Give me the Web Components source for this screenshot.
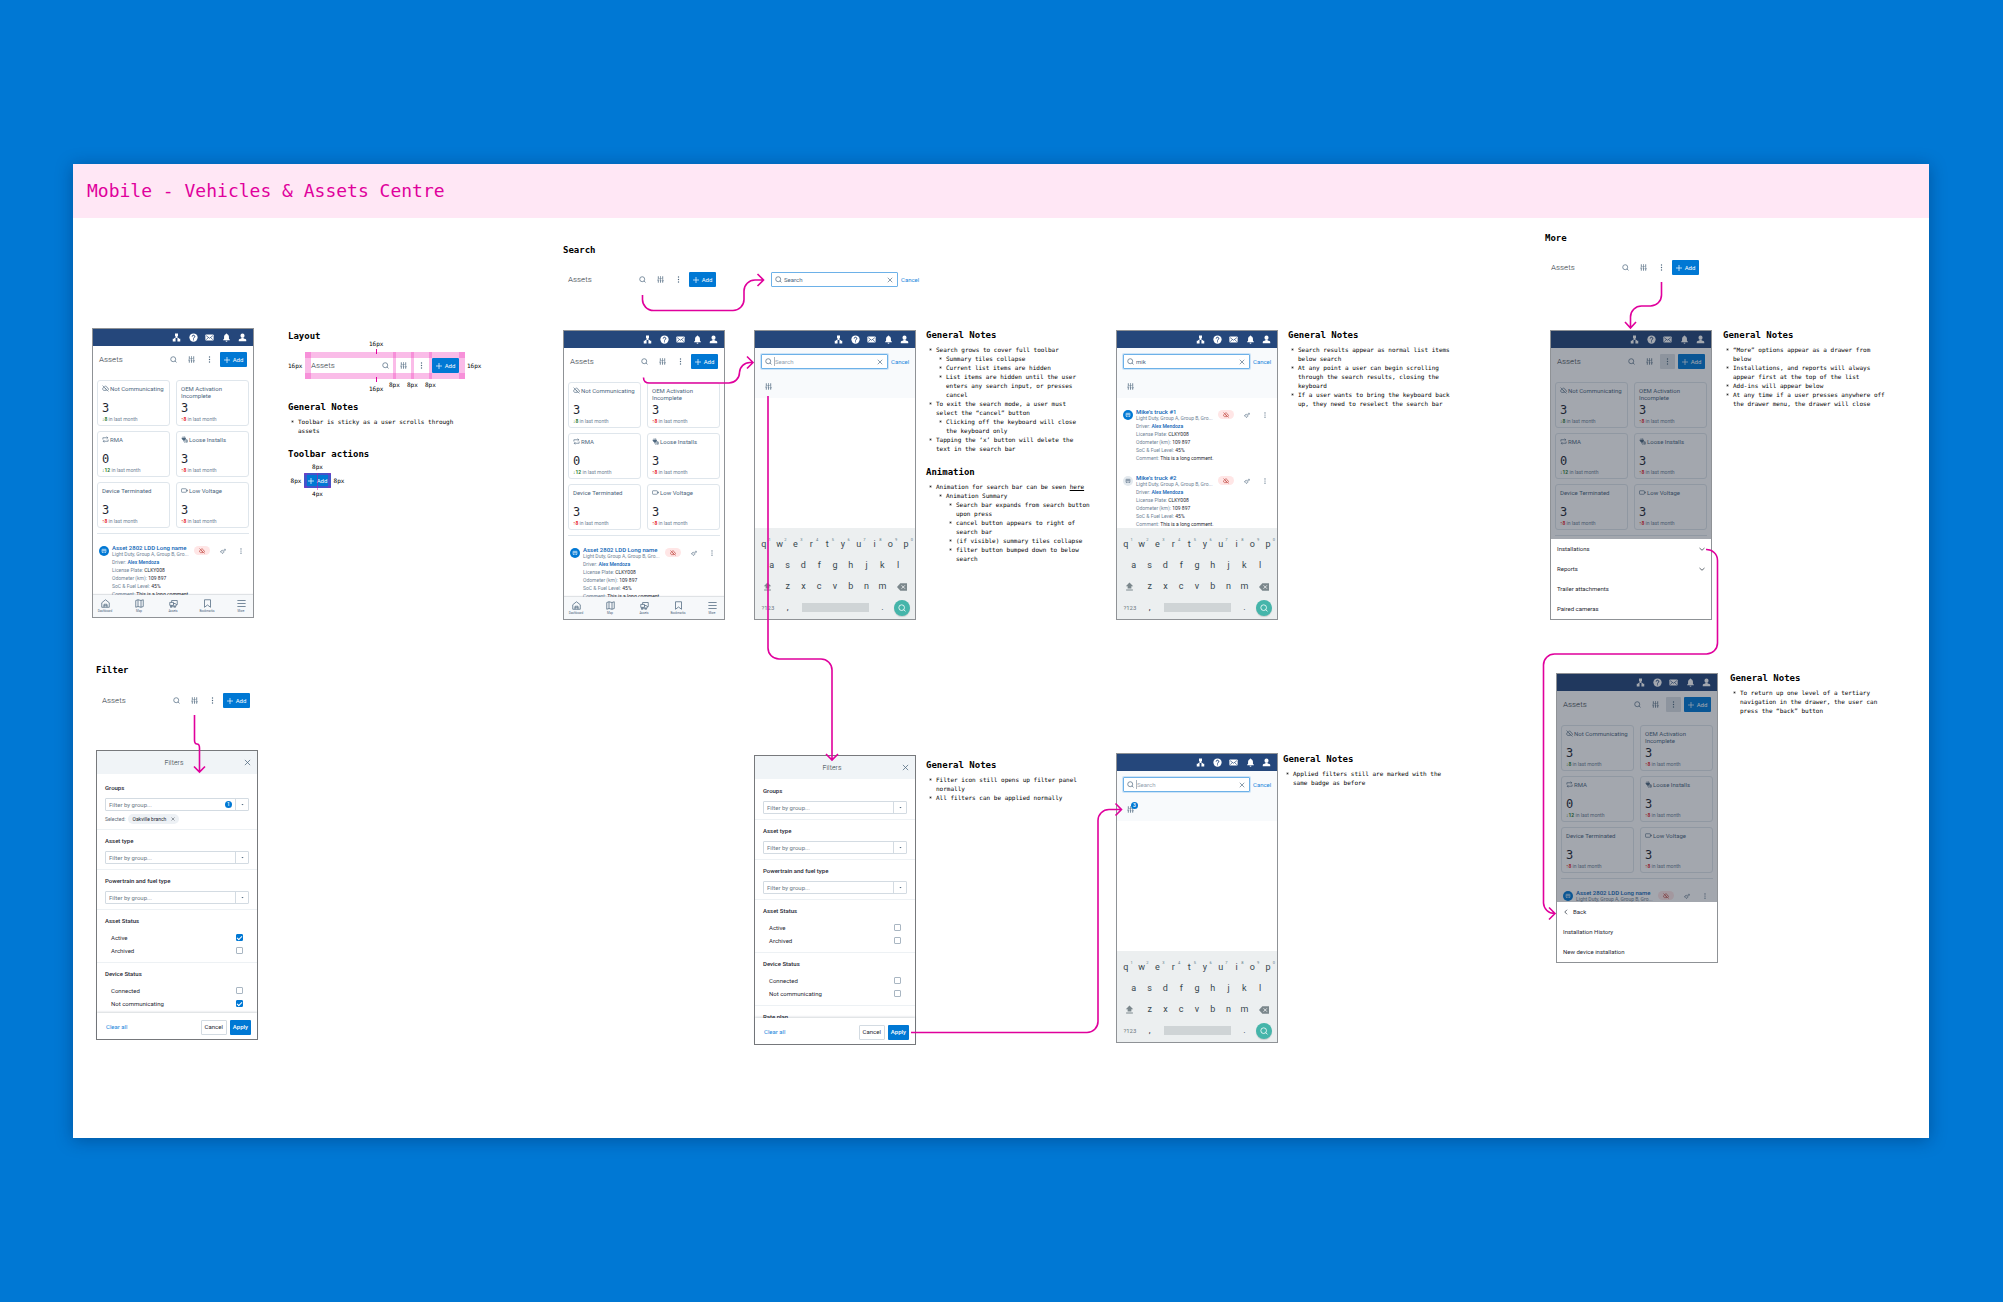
<!DOCTYPE html>
<html lang="en">
<head>
<meta charset="utf-8">
<title>Mobile - Vehicles &amp; Assets Centre</title>
<style>
  html { background: #0078d4; }
  body {
    margin: 0;
    padding: 164px 74px 164px 73px;
    font-family: Roboto, "Liberation Sans", sans-serif;
    --mono: "DejaVu Sans Mono", "Liberation Mono", monospace;
    --magenta: #e0009c;
    --blue: #0078d4;
    --navy: #25477b;
    --slate: #4e677e;
    --ink: #1f2833;
    --line: #dfe6ec;
  }
</style>
</head>
<body>
<spec-board heading="Mobile - Vehicles &amp; Assets Centre">

  <!-- Base layout -->
  <phone-frame style="left:19px;top:110px"><top-nav></top-nav><asset-toolbar></asset-toolbar><summary-grid></summary-grid><asset-row name="Asset 2802 LDD Long name"></asset-row><tab-bar slot="bottom"></tab-bar></phone-frame>
  <spec-heading style="left:215px;top:112px">Layout</spec-heading>
  <toolbar-diagram style="left:215px;top:121px"></toolbar-diagram>
  <note-stack style="left:215px;top:183px">
    <note-block heading="General Notes"><note-item>Toolbar is sticky as a user scrolls through assets</note-item></note-block>
    <note-block heading="Toolbar actions"></note-block>
  </note-stack>
  <button-diagram style="left:217px;top:245px"></button-diagram>

  <!-- Search -->
  <spec-heading style="left:490px;top:26px">Search</spec-heading>
  <asset-toolbar class="loose" style="left:489px;top:48px"></asset-toolbar>
  <search-bar class="loose" style="left:692px;top:48px"></search-bar>
  <phone-frame style="left:490px;top:112px"><top-nav></top-nav><asset-toolbar></asset-toolbar><summary-grid></summary-grid><asset-row name="Asset 2802 LDD Long name"></asset-row><tab-bar slot="bottom"></tab-bar></phone-frame>
  <phone-frame style="left:681px;top:112px"><top-nav></top-nav><search-head caret></search-head><soft-keyboard slot="bottom"></soft-keyboard></phone-frame>
  <note-stack style="left:853px;top:111px">
    <note-block heading="General Notes" style="--chars:42ch">
      <note-item>Search grows to cover full toolbar
        <note-item slot="sub" level="2">Summary tiles collapse</note-item>
        <note-item slot="sub" level="2">Current list items are hidden</note-item>
        <note-item slot="sub" level="2">List items are hidden until the user enters any search input, or presses cancel</note-item>
      </note-item>
      <note-item>To exit the search mode, a user must select the “cancel” button
        <note-item slot="sub" level="2">Clicking off the keyboard will close the keyboard only</note-item>
      </note-item>
      <note-item>Tapping the ‘x’ button will delete the text in the search bar</note-item>
    </note-block>
    <note-block heading="Animation" style="--chars:42ch">
      <note-item>Animation for search bar can be seen <a href="#animation" style="color:inherit">here</a>
        <note-item slot="sub" level="2">Animation Summary
          <note-item slot="sub" level="3">Search bar expands from search button upon press</note-item>
          <note-item slot="sub" level="3">cancel button appears to right of search bar</note-item>
          <note-item slot="sub" level="3">(if visible) summary tiles collapse</note-item>
          <note-item slot="sub" level="3">filter button bumped down to below search</note-item>
        </note-item>
      </note-item>
    </note-block>
  </note-stack>
  <phone-frame style="left:1043px;top:112px"><top-nav></top-nav><search-head value="mik"></search-head><asset-row name="Mike’s truck #1"></asset-row><asset-row name="Mike’s truck #2" muted></asset-row><soft-keyboard slot="bottom"></soft-keyboard></phone-frame>
  <note-stack style="left:1215px;top:111px">
    <note-block heading="General Notes">
      <note-item>Search results appear as normal list items below search</note-item>
      <note-item>At any point a user can begin scrolling through the search results, closing the keyboard</note-item>
      <note-item>If a user wants to bring the keyboard back up, they need to reselect the search bar</note-item>
    </note-block>
  </note-stack>

  <!-- More -->
  <spec-heading style="left:1472px;top:14px">More</spec-heading>
  <asset-toolbar class="loose" style="left:1472px;top:36px"></asset-toolbar>
  <phone-frame style="left:1477px;top:112px"><top-nav></top-nav><asset-toolbar active></asset-toolbar><summary-grid></summary-grid>
    <action-drawer slot="drawer">
      <drawer-item expands>Installations</drawer-item><drawer-item expands>Reports</drawer-item><drawer-item>Trailer attachments</drawer-item><drawer-item>Paired cameras</drawer-item>
    </action-drawer>
  </phone-frame>
  <note-stack style="left:1650px;top:111px">
    <note-block heading="General Notes">
      <note-item>“More” options appear as a drawer from below</note-item>
      <note-item>Installations, and reports will always appear first at the top of the list</note-item>
      <note-item>Add-ins will appear below</note-item>
      <note-item>At any time if a user presses anywhere off the drawer menu, the drawer will close</note-item>
    </note-block>
  </note-stack>
  <phone-frame style="left:1483px;top:455px"><top-nav></top-nav><asset-toolbar active></asset-toolbar><summary-grid></summary-grid><asset-row name="Asset 2802 LDD Long name" compact></asset-row>
    <action-drawer slot="drawer">
      <drawer-item back>Back</drawer-item><drawer-item>Installation History</drawer-item><drawer-item>New device installation</drawer-item>
    </action-drawer>
  </phone-frame>
  <note-stack style="left:1657px;top:454px">
    <note-block heading="General Notes"><note-item>To return up one level of a tertiary navigation in the drawer, the user can press the “back” button</note-item></note-block>
  </note-stack>

  <!-- Filter -->
  <spec-heading style="left:23px;top:446px">Filter</spec-heading>
  <asset-toolbar class="loose" style="left:23px;top:469px"></asset-toolbar>
  <filter-panel style="left:23px;top:532px" selected="Oakville branch" checked="Active,Not communicating"></filter-panel>
  <filter-panel style="left:681px;top:537px"></filter-panel>
  <note-stack style="left:853px;top:541px">
    <note-block heading="General Notes">
      <note-item>Filter icon still opens up filter panel normally</note-item>
      <note-item>All filters can be applied normally</note-item>
    </note-block>
  </note-stack>
  <phone-frame style="left:1043px;top:535px"><top-nav></top-nav><search-head caret badge="3"></search-head><soft-keyboard slot="bottom"></soft-keyboard></phone-frame>
  <note-stack style="left:1210px;top:535px">
    <note-block heading="General Notes"><note-item>Applied filters still are marked with the same badge as before</note-item></note-block>
  </note-stack>

  <flow-arrows></flow-arrows>
</spec-board>

<script>
const ICONS = {
  sitemap: '<path fill="currentColor" d="M8 1.500h8V9h-2.500v2l5 3v1H22v7.500h-7.500V15H16l-4-2.300L8 15h1.500v7.500H2V15h3.500v-1l5-3V9H8z"/>',
  help: '<circle cx="12" cy="12" r="11" fill="currentColor"/><path fill="none" stroke="#25477b" stroke-width="2.600" d="M8.500 9.500a3.500 3.500 0 1 1 5.200 3c-1.200.7-1.700 1.200-1.700 2.500M12 17v2.500"/>',
  mail: '<rect x="1" y="4" width="22" height="16" rx="2" fill="currentColor"/><path fill="none" stroke="#25477b" stroke-width="1.800" d="M3 7l9 7 9-7M3 18l6-6M21 18l-6-6"/>',
  bell: '<path fill="currentColor" d="M12 1.500c1 0 1.800.8 1.800 1.800 3 .9 4.700 3.400 4.700 6.700v5l2.500 3v1.500H3V18l2.500-3v-5c0-3.300 1.700-5.800 4.700-6.700 0-1 .8-1.800 1.800-1.800zM9.500 20.500h5a2.500 2.500 0 0 1-5 0z"/>',
  user: '<circle cx="12" cy="7" r="5.500" fill="currentColor"/><path fill="currentColor" d="M9 12h6v2.500l5 1.500c1.500.5 2 1.500 2 3V22H2v-3c0-1.500.5-2.500 2-3l5-1.500z"/>',
  search: '<g fill="none" stroke="currentColor" stroke-width="2.400"><circle cx="11" cy="11" r="8.500"/><path d="M17 17l5.500 5"/></g>',
  filter: '<path fill="none" stroke="currentColor" stroke-width="2.600" d="M4.500 1v10M4.500 15v8M12 1v5M12 11v12M19.500 1v12M19.500 17v6M1 14h7M8.500 8.500h7M16 16h7"/>',
  more: '<g fill="currentColor"><circle cx="12" cy="3.500" r="2.400"/><circle cx="12" cy="12" r="2.400"/><circle cx="12" cy="20.500" r="2.400"/></g>',
  plus: '<path fill="none" stroke="currentColor" stroke-width="2.800" d="M12 0v24M0 12h24"/>',
  close: '<path fill="none" stroke="currentColor" stroke-width="2.600" d="M3 3l18 18M21 3L3 21"/>',
  cloudoff: '<path fill="none" stroke="currentColor" stroke-width="2.200" d="M8 5c5-3 9 0 9.500 4.500 5 .5 6 6 3 8.500M6.500 8C1 9 .5 17 6 18.500h10M2 2l20 20M9 11l6 5"/>',
  repeat: '<path fill="none" stroke="currentColor" stroke-width="2.200" d="M3 12V6h17M16 2l4 4-4 4M21 12v6H4M8 14l-4 4 4 4"/>',
  plug: '<path fill="currentColor" d="M6 1h2v5h4V1h2v5h3v3h-1v4l-2 2H8l-4-3V9H2V6h4z"/><path fill="none" stroke="currentColor" stroke-width="2.400" d="M10 14v4c0 3 3 4 5 3M14 17h8M16 21h6M17 13h4v8"/>',
  battery: '<rect x="1.500" y="6" width="17" height="12" rx="2" fill="none" stroke="currentColor" stroke-width="2.200"/><path fill="currentColor" d="M19.500 9.500H23v5h-3.500z"/>',
  truck: '<path fill="none" stroke="currentColor" stroke-width="2" d="M4 5h16v12H4zM4 11h16M9 5v6M15 5v6M6 17v3M18 17v3"/>',
  link: '<path fill="none" stroke="currentColor" stroke-width="2.400" d="M13 15c2-1 3 1 1.500 3l-2.500 3c-2 2-5 0-3.500-3M11 9c-2 1-4 0-6 2l-3 3c-1 3 2 4 4 2l3-2M15 9l3-4c2-2 5 0 4 3l-4 4c-2 1-4 1-6-2"/>',
  home: '<path fill="none" stroke="currentColor" stroke-width="2" d="M2 10l10-8 10 8v12H2zM8 22v-8h8v8M7 18h10"/>',
  map: '<path fill="none" stroke="currentColor" stroke-width="2" d="M2 4l6-2 8 2 6-2v18l-6 2-8-2-6 2zM8 2v18M16 4v18"/>',
  trucks: '<path fill="none" stroke="currentColor" stroke-width="2" d="M7 4h15v11h-3M7 4v5M2 17V9h10v8zM12 12h5l2 3v4H3M6 19.500a2 2 0 1 0 .1 0M15 19.500a2 2 0 1 0 .1 0"/>',
  bookmark: '<path fill="none" stroke="currentColor" stroke-width="2" d="M4 2h16v20l-8-6-8 6z"/>',
  menu: '<path fill="none" stroke="currentColor" stroke-width="2" d="M1 4h22M1 12h22M1 20h22"/>',
  chevdown: '<path fill="none" stroke="currentColor" stroke-width="2.800" d="M2 8l10 9 10-9"/>',
  chevleft: '<path fill="none" stroke="currentColor" stroke-width="2.800" d="M16 3l-9 9 9 9"/>',
  caret: '<path fill="currentColor" d="M3 7h18l-9 10z"/>',
  shift: '<path fill="currentColor" d="M12 1l10 10h-5v6H7v-6H2zM3 20h18v2.500H3z"/>',
  erase: '<path fill="currentColor" d="M8 3h16v18H8L0 12z"/><path stroke="#eceff0" stroke-width="2.200" d="M11 8l8 8M19 8l-8 8"/>'
};

/* Shared base: renders a style sheet and a body into an open shadow root. */
class Part extends HTMLElement {
  connectedCallback() {
    if (this.shadowRoot) return;
    this.attachShadow({ mode: 'open' }).innerHTML =
      `<style>*{box-sizing:border-box}:host{display:block;box-sizing:border-box}button,input,select{font:inherit;color:inherit;margin:0;padding:0;border:0;background:none;min-width:0}a{text-decoration:none;color:inherit}svg{display:block}${this.css()}</style>${this.body()}`;
  }
  css() { return ''; }
  body() { return '<slot></slot>'; }
  at(name) { return this.getAttribute(name); }
}
const part = (tag, css, body) => customElements.define(tag, class extends Part {
  css() { return css; }
  body() { return body ? body.call(this, this) : '<slot></slot>'; }
});
const icon = (name, size = 8) => `<app-icon name="${name}" style="--size:${size}px"></app-icon>`;

part('app-icon', `:host{flex:none;width:var(--size);height:var(--size)}svg{width:100%;height:100%}`,
  el => `<svg viewBox="0 0 24 24" aria-hidden="true">${ICONS[el.at('name')]}</svg>`);

/* ---- canvas ---- */
part('spec-board', `
  :host{background:#fff;box-shadow:0 2px 16px rgba(0,20,60,.35)}
  header{background:#ffe7f5;padding:14px;height:54px;display:flex;align-items:center}
  h1{margin:0;font:400 18px/26px var(--mono);color:var(--magenta);white-space:nowrap}
  main{position:relative;min-height:920px}
  ::slotted(*){position:absolute}`,
  el => `<header><h1>${el.at('heading').replace('&', '&amp;')}</h1></header><main><slot></slot></main>`);

part('spec-heading', `h2{margin:0;font:700 9px/12px var(--mono);color:#000;white-space:nowrap}`, () => `<h2><slot></slot></h2>`);
part('note-stack', `:host{display:flex;flex-direction:column;gap:13px}`);
part('note-block', `:host{display:flex;flex-direction:column;gap:4px;color:#000}
  div{display:flex;flex-direction:column;padding-left:10px;font:6px/9px var(--mono)}`,
  el => `<spec-heading>${el.at('heading')}</spec-heading><div role="list"><slot></slot></div>`);
part('note-item', `
  .row{position:relative;max-width:var(--chars,43ch)}
  :host([level="2"]) .row{max-width:39ch}
  :host([level="3"]) .row{max-width:37ch}
  .row::before{content:"";position:absolute;left:-6px;top:4px;width:1px;height:1px;border-radius:1px;background:#000;box-shadow:0 0 0 1px rgba(0,0,0,.25)}
  .sub{padding-left:10px}`,
  () => `<div class="row"><slot></slot></div><div class="sub"><slot name="sub"></slot></div>`);

/* ---- phone chrome ---- */
part('phone-frame', `
  :host{position:relative;width:162px;height:290px;border:1px solid #8f9296;background:#fff;display:flex;flex-direction:column;overflow:hidden}
  .body{flex:1;min-height:0;overflow:hidden}
  ::slotted([slot=drawer]){position:absolute;inset:0}`,
  () => `<div class="body"><slot></slot></div><slot name="bottom"></slot><slot name="drawer"></slot>`);
part('top-nav', `nav{background:var(--navy);height:17px;display:flex;justify-content:flex-end;padding-right:6px;color:#fff}
  div{width:75px;display:flex;justify-content:space-between;align-items:center}`,
  () => `<nav><div>${['sitemap', 'help', 'mail', 'bell', 'user'].map(n => icon(n, 9)).join('')}</div></nav>`);
part('add-button', `:host{flex:none}
  button{display:flex;align-items:center;justify-content:center;gap:3px;width:27px;height:15px;border-radius:1px;background:var(--blue);color:#fff;font:400 6px/8px Roboto,sans-serif}`,
  () => `<button type="button">${icon('plus', 6)}Add</button>`);
part('asset-toolbar', `
  :host{width:160px;color:var(--slate)}
  div{display:flex;align-items:center;gap:3px;padding:6px}
  h3{flex:1;margin:0;font:300 8px/15px Roboto,sans-serif;color:#2c3640}
  button{width:15px;height:15px;display:flex;align-items:center;justify-content:center;border-radius:1px}
  :host([active]) .more{background:#dbe0e5}`,
  () => `<div><h3>Assets</h3><button type="button" aria-label="Search">${icon('search', 7)}</button><button type="button" aria-label="Filters">${icon('filter', 7)}</button><button type="button" class="more" aria-label="More">${icon('more', 7)}</button><add-button></add-button></div>`);
part('summary-grid', `
  :host{padding:7px 4px 0}
  div{display:grid;grid-template-columns:1fr 1fr;gap:5px 6px;padding-bottom:5px;border-bottom:1px solid var(--line)}`,
  () => `<div><summary-tile icon="cloudoff" label="Not Communicating" count="3" delta="↓8" good></summary-tile><summary-tile label="OEM Activation Incomplete" count="3" delta="↑8"></summary-tile><summary-tile icon="repeat" label="RMA" count="0" delta="↓12" good></summary-tile><summary-tile icon="plug" label="Loose Installs" count="3" delta="↑8"></summary-tile><summary-tile label="Device Terminated" count="3" delta="↑8"></summary-tile><summary-tile icon="battery" label="Low Voltage" count="3" delta="↑8"></summary-tile></div>`);
part('summary-tile', `
  :host{height:46px;border:1px solid var(--line);border-radius:3px;padding:4px 4px 0;color:var(--slate)}
  .label{display:flex;gap:1px;height:16px;font:6px/7px Roboto,sans-serif}
  .count{font:12px/15px var(--mono);color:var(--ink)}
  .foot{font:5px/6px Roboto,sans-serif;color:#6f8396;white-space:nowrap}
  b{color:#e8272c;font-weight:700}
  :host([good]) b{color:#2e7d32}`,
  el => `<div class="label">${el.at('icon') ? icon(el.at('icon'), 7) : ''}<span>${el.at('label')}</span></div><div class="count">${el.at('count')}</div><div class="foot"><b>${el.at('delta')}</b> in last month</div>`);
part('asset-row', `
  :host{padding:10px 6px 2px;display:flex;align-items:flex-start;color:#6f8396}
  .avatar{flex:none;width:10px;height:10px;margin:2px 3px 0 0;border-radius:50%;background:var(--blue);color:#fff;display:flex;align-items:center;justify-content:center}
  :host([muted]) .avatar{background:#e3e9ee;color:var(--slate)}
  .text{flex:1;min-width:0;white-space:nowrap;font:5px/8px Roboto,sans-serif}
  .text div{height:8px}
  .name{font:700 6px/7px Roboto,sans-serif;height:7px!important}
  .sub{line-height:7px;height:7px!important}
  a{color:#0e65b5;font-weight:500} b{font-weight:400;color:var(--ink)}
  .tools{flex:none;display:flex;align-items:center;height:9px;margin-top:2px;color:var(--slate)}
  .pill{width:16px;height:9px;border-radius:5px;background:#ffe6e6;color:#b3261e;display:flex;align-items:center;justify-content:center}
  .link{margin-left:10px}.dots{margin:0 3px 0 12px}`,
  el => `<span class="avatar">${icon('truck', 6)}</span><div class="text"><div class="name"><a href="#asset">${el.at('name')}</a></div><div class="sub">Light Duty, Group A, Group B, Gro...</div>${el.hasAttribute('compact') ? '' : '<div>Driver: <a href="#driver">Alex Mendoza</a></div><div>License Plate: <b>CLKY008</b></div><div>Odometer (km): <b>109 897</b></div><div>SoC &amp; Fuel Level: <b>45%</b></div><div>Comment: <b>This is a long comment.</b></div>'}</div><div class="tools"><span class="pill">${icon('cloudoff', 6)}</span><span class="link">${icon('link', 6)}</span><span class="dots">${icon('more', 6)}</span></div>`);
part('tab-bar', `
  nav{height:22px;background:#f6f8fa;box-shadow:0 -1px 1px rgba(40,60,80,.15);display:flex;justify-content:space-between;padding:4px 3px 0;position:relative}
  a{width:18px;display:flex;flex-direction:column;align-items:center;gap:1px;font:3px/5px Roboto,sans-serif;color:var(--slate)}`,
  () => `<nav>${[['home', 'Dashboard'], ['map', 'Map'], ['trucks', 'Assets'], ['bookmark', 'Bookmarks'], ['menu', 'More']].map(([i, t]) => `<a href="#${i}">${icon(i, 9)}${t}</a>`).join('')}</nav>`);

/* ---- search ---- */
part('search-bar', `
  :host{width:160px}
  .bar{display:flex;align-items:center;gap:3px;padding:6px 0 6px 6px}
  label{flex:none;width:127px;height:15px;display:flex;align-items:center;gap:2px;padding:0 4px 0 3px;border:1px solid #6db1e8;border-radius:1px;background:#fff;color:var(--slate)}
  input{flex:1;width:1px;height:9px;outline:0;font:6px/9px Roboto,sans-serif}
  input::placeholder{color:var(--slate);opacity:1}
  :host([caret]) input{border-left:1px solid #a9b4be}
  :host([caret]) input::placeholder{color:#94a3b1}
  :host([caret]) label,:host([value]) label{box-shadow:0 0 0 1px rgba(110,180,235,.3)}
  button{font:400 6px/9px Roboto,sans-serif;color:#1a86dc}
  label button{display:block}label button app-icon{color:var(--slate)}`,
  el => `<div class="bar"><label>${icon('search', 7)}<input type="text" aria-label="Search assets" placeholder="Search" value="${el.at('value') || ''}"><button type="button" aria-label="Clear">${icon('close', 6)}</button></label><button type="button">Cancel</button></div>`);
part('search-head', `
  :host{background:#f8fafc;height:50px}
  .filter{position:relative;display:block;width:7px;height:7px;margin:8px 0 0 10px;color:var(--slate)}
  .badge{position:absolute;left:4px;top:-4px;width:7px;height:7px;border-radius:50%;background:var(--blue);color:#fff;font:500 5px/7px Roboto,sans-serif;text-align:center}`,
  el => `<search-bar ${el.at('value') ? `value="${el.at('value')}"` : 'caret'}></search-bar><button type="button" class="filter" aria-label="Filters">${icon('filter', 7)}${el.at('badge') ? `<span class="badge">${el.at('badge')}</span>` : ''}</button>`);
part('soft-keyboard', `
  :host{background:#eceff0;padding:6px 1px 0;height:91px;color:#37474f;font:9px/21px Roboto,sans-serif}
  .row{display:flex;height:21px;justify-content:center;align-items:center}
  .key{flex:0 0 10%;position:relative;text-align:center;height:21px;line-height:21px}
  sup{position:absolute;right:1px;top:3px;font:4px/5px Roboto,sans-serif;color:#607d8b}
  .wide{flex:1;display:flex;justify-content:center;align-items:center;height:21px;font-size:6px;color:#6c7a80}
  .wide app-icon{color:#7b878c}
  .space{flex:none;width:67px;height:9px;margin:0 6px;background:#cfd4d6}
  .go{width:16px;height:16px;border-radius:50%;background:#45b5aa;display:flex;align-items:center;justify-content:center;box-shadow:0 1px 1px rgba(0,0,0,.15)}
  .go app-icon{color:#fff}`,
  () => {
    const keys = s => [...s].map(k => `<button type="button" class="key">${k}</button>`).join('');
    return `<div class="row">${[...'qwertyuiop'].map((k, i) => `<button type="button" class="key">${k}<sup>${(i + 1) % 10}</sup></button>`).join('')}</div>
    <div class="row">${keys('asdfghjkl')}</div>
    <div class="row"><button type="button" class="wide" aria-label="Shift">${icon('shift', 9)}</button>${keys('zxcvbnm')}<button type="button" class="wide" aria-label="Delete">${icon('erase', 10)}</button></div>
    <div class="row"><button type="button" class="wide">?123</button>${keys(',')}<button type="button" class="space" aria-label="Space"></button>${keys('.')}<button type="button" class="wide" aria-label="Go"><span class="go">${icon('search', 8)}</span></button></div>`;
  });

/* ---- drawer ---- */
part('action-drawer', `
  :host{display:flex;flex-direction:column;background:rgba(24,36,53,.4)}
  .scrim{flex:1}
  .sheet{background:#fff}`,
  () => `<div class="scrim"></div><div class="sheet"><slot></slot></div>`);
part('drawer-item', `
  button{width:100%;height:20px;padding:0 6px;display:flex;align-items:center;gap:4px;font:6px/8px Roboto,sans-serif;color:var(--ink)}
  .txt{flex:1;text-align:left}`,
  el => `<button type="button">${el.hasAttribute('back') ? icon('chevleft', 6) : ''}<span class="txt"><slot></slot></span>${el.hasAttribute('expands') ? icon('chevdown', 6) : ''}</button>`);

/* ---- filter panel ---- */
part('filter-section', `
  :host{padding:7px 8px 5px;border-bottom:1px solid #edf1f4}
  h4{margin:0 0 7px;font:500 6px/7px Roboto,sans-serif;color:var(--ink)}`,
  el => `<h4>${el.at('label')}</h4><slot></slot>`);
part('filter-select', `
  .box{position:relative;display:flex;align-items:center;height:13px;border:1px solid #d3dbe2;border-radius:1px}
  select{appearance:none;flex:1;height:11px;padding:0 3px;font:6px/11px Roboto,sans-serif;color:#6b7885;outline:0}
  .arrow{width:13px;height:11px;border-left:1px solid #d3dbe2;display:flex;align-items:center;justify-content:center;color:var(--slate)}
  .num{width:7px;height:7px;margin-right:3px;border-radius:50%;background:var(--blue);color:#fff;font:500 5px/7px Roboto,sans-serif;text-align:center}
  .sel{display:flex;align-items:center;gap:3px;height:10px;margin-top:3px;font:5px/10px Roboto,sans-serif;color:#5c6a77}
  .chip{display:flex;align-items:center;gap:5px;height:10px;padding:0 4px;border-radius:5px;background:#edf1f5;color:var(--ink)}`,
  el => `<div class="box"><select aria-label="${el.at('label')}"><option>Filter by group...</option></select>${el.at('chip') ? '<span class="num">1</span>' : ''}<span class="arrow">${icon('caret', 3)}</span></div>${el.at('chip') ? `<div class="sel"><span>Selected:</span><span class="chip">${el.at('chip')}${icon('close', 4)}</span></div>` : ''}`);
part('filter-check', `
  label{display:flex;align-items:center;justify-content:space-between;height:13px;padding:0 6px;font:6px/13px Roboto,sans-serif;color:var(--ink)}
  input{appearance:none;width:7px;height:7px;border:1px solid #a9b6c2;border-radius:1px;background:#fff;display:flex;align-items:center;justify-content:center}
  input:checked{background:var(--blue);border-color:var(--blue)}
  input:checked::before{content:"";width:2px;height:4px;border:solid #fff;border-width:0 1px 1px 0;transform:rotate(45deg)}`,
  el => `<label><slot></slot><input type="checkbox" ${el.hasAttribute('on') ? 'checked' : ''}></label>`);
part('filter-panel', `
  :host{width:162px;height:290px;border:1px solid #77797c;background:#fff;display:flex;flex-direction:column}
  header{flex:none;height:23px;background:#f0f4f7;display:grid;grid-template-columns:1fr auto 1fr;align-items:center;padding:0 6px 0 0;color:var(--slate)}
  h3{grid-column:2;margin:0;font:300 7px/10px Roboto,sans-serif;color:#2c3640}
  header button{justify-self:end}
  .list{flex:1;min-height:0;overflow:hidden;padding-top:1px}
  :host([selected]) .list{padding-top:3px}
  footer{flex:none;height:26px;display:flex;align-items:center;gap:3px;padding:2px 6px 0 9px;box-shadow:0 -1px 2px rgba(40,60,80,.2);position:relative;font:500 6px/8px Roboto,sans-serif}
  .clear{margin-right:auto;color:#1a86dc;font-weight:400}
  .btn{height:15px;border-radius:1px;padding:0 3px}
  .cancel{border:1px solid #d3dbe2;color:var(--ink);font-weight:400}
  .apply{background:var(--blue);color:#fff}`,
  el => {
    const on = (el.at('checked') || '').split(',');
    const check = t => `<filter-check ${on.includes(t) ? 'on' : ''}>${t}</filter-check>`;
    const pick = (t, chip) => `<filter-section label="${t}"><filter-select label="${t}" ${chip ? `chip="${chip}"` : ''}></filter-select></filter-section>`;
    return `<header><h3>Filters</h3><button type="button" aria-label="Close">${icon('close', 7)}</button></header>
    <div class="list">${pick('Groups', el.at('selected'))}${pick('Asset type')}${pick('Powertrain and fuel type')}
    <filter-section label="Asset Status">${check('Active')}${check('Archived')}</filter-section>
    <filter-section label="Device Status">${check('Connected')}${check('Not communicating')}</filter-section>
    ${el.at('selected') ? '' : '<filter-section label="Rate plan"></filter-section>'}</div>
    <footer><button type="button" class="clear">Clear all</button><button type="button" class="btn cancel">Cancel</button><button type="button" class="btn apply">Apply</button></footer>`;
  });

/* ---- annotated diagrams: spacing bands and callouts are pinned over the part they measure ---- */
part('toolbar-diagram', `
  :host{width:194px;height:54px;font:6px/8px var(--mono);color:#000}
  .strip{position:absolute;left:17px;top:13px}
  i{position:absolute;background:rgba(241,64,189,.35)}
  .v{top:0;height:27px;width:3px}.e{width:6px}.h{left:0;width:160px;height:6px}
  u{position:absolute;width:1px;height:5px;left:71px;background:var(--magenta)}
  span{position:absolute;white-space:nowrap}`,
  () => `<div class="strip"><asset-toolbar></asset-toolbar><i class="v e" style="left:0"></i><i class="v" style="left:88px"></i><i class="v" style="left:106px"></i><i class="v" style="left:124px"></i><i class="v e" style="right:0"></i><i class="h" style="top:0"></i><i class="h" style="bottom:0"></i><u style="top:-3px"></u><u style="bottom:-3px"></u></div>
  <span style="left:81px;top:1px">16px</span><span style="left:0;top:23px">16px</span><span style="left:179px;top:23px">16px</span><span style="left:81px;top:46px">16px</span><span style="left:101px;top:42px">8px</span><span style="left:119px;top:42px">8px</span><span style="left:137px;top:42px">8px</span>`);
part('button-diagram', `
  :host{display:grid;grid-template:8px 15px 8px/12px 27px 12px;gap:2px;justify-items:center;align-items:center;font:6px/8px var(--mono);color:#000}
  .btn{position:relative;grid-area:2/2}
  i{position:absolute;background:rgba(150,40,190,.45)}
  u{position:absolute;left:13px;top:0;width:1px;height:17px;background:rgba(224,0,156,.45)}
  .t{grid-area:1/2}.l{grid-area:2/1}.r{grid-area:2/3}.b{grid-area:3/2}`,
  () => `<span class="t">8px</span><span class="l">8px</span><div class="btn"><add-button></add-button><i style="left:0;top:0;width:3px;height:15px"></i><i style="right:0;top:0;width:3px;height:15px"></i><i style="left:0;top:0;width:27px;height:2px"></i><i style="left:0;bottom:0;width:27px;height:2px"></i><u></u></div><span class="r">8px</span><span class="b">4px</span>`);

/* ---- connectors ---- */
part('flow-arrows', `:host{inset:0;pointer-events:none}svg{position:absolute;left:-73px;top:-218px;width:2003px;height:1302px;fill:none;stroke:var(--magenta);stroke-width:1.6}`,
  () => `<svg viewBox="0 0 2003 1302" aria-hidden="true">
  <path d="M642.500 295v4a11 11 0 0 0 11 11.500H733a11 11 0 0 0 11-11V291a11 11 0 0 1 11-11h8.500M757.500 274l6 6-6 6"/>
  <path d="M643.500 377.500q0 5.500 6 5.500H729a10.500 10.500 0 0 0 10.500-10.500a10.500 10.500 0 0 1 10.500-10h3M747 356.500l6 6-6 6"/>
  <path d="M768 396v252a11 11 0 0 0 11 11h42a11 11 0 0 1 11 11v89.500M826 754l6 6 6-6"/>
  <path d="M911 1032.500h176a11 11 0 0 0 11-11V820.500a11 11 0 0 1 11-11h12.500M1115.500 803.500l6 6-6 6"/>
  <path d="M1661.500 282v13a11 11 0 0 1-11 11h-9a11 11 0 0 0-11 11v10.500M1625 322l5.500 6 5.500-6"/>
  <path d="M1706 549.500a11 11 0 0 1 11.500 11V643a11 11 0 0 1-11 11h-152a11 11 0 0 0-11 11v238a11 11 0 0 0 11 10.500M1549 907.500l6 6-6 6"/>
  <path d="M194.500 715v25q0 4 2.500 4t2.500 4v24M194 766.500l5.500 5.500 5.500-5.500"/></svg>`);
</script>
</body>
</html>
